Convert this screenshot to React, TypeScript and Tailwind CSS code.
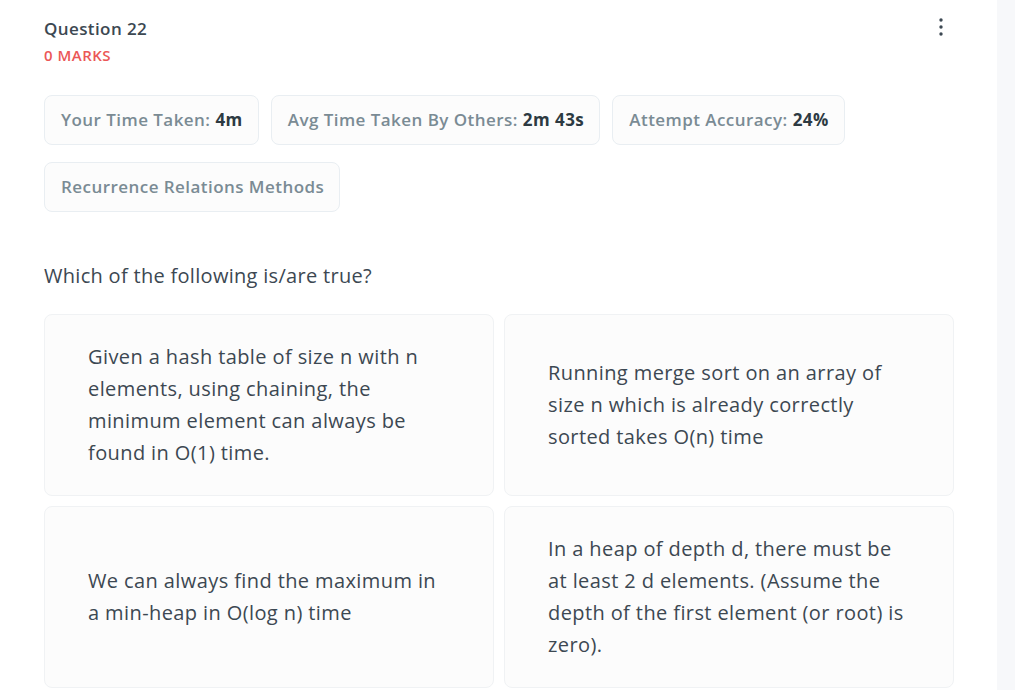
const stats = [
  { label: 'Your Time Taken:', value: '4m' },
  { label: 'Avg Time Taken By Others:', value: '2m 43s' },
  { label: 'Attempt Accuracy:', value: '24%' },
];

const options = [
  'Given a hash table of size n with n elements, using chaining, the minimum element can always be found in O(1) time.',
  'Running merge sort on an array of size n which is already correctly sorted takes O(n) time',
  'We can always find the maximum in a min-heap in O(log n) time',
  'In a heap of depth d, there must be at least 2 d elements. (Assume the depth of the first element (or root) is zero).',
];

function MoreIcon() {
  return (
    <svg width="8" height="22" viewBox="0 0 8 22" className="text-[#3c4852]">
      <circle cx="4" cy="4" r="1.7" fill="currentColor" />
      <circle cx="4" cy="11" r="1.7" fill="currentColor" />
      <circle cx="4" cy="18" r="1.7" fill="currentColor" />
    </svg>
  );
}

export default function App() {
  return (
    <div className="flex h-[690px] w-[1015px] overflow-hidden bg-white font-['Open_Sans',sans-serif] text-[#3c4852]">
      <main className="w-[997px] pl-[44px] pr-[43px] pt-[18px]">
        <div className="flex items-start justify-between">
          <div>
            <h2 className="text-[17px] font-semibold leading-[22px] tracking-[0.4px]">Question 22</h2>
            <p className="mt-[6px] text-[15px] font-semibold leading-[18px] tracking-[0.5px] text-[#eb5757]">0 MARKS</p>
          </div>
          <div className="mr-[9px] mt-[-2px]">
            <MoreIcon />
          </div>
        </div>

        <div className="mt-[31px] flex flex-wrap gap-x-[12px] gap-y-[17px]">
          {stats.map(({ label, value }) => (
            <div
              key={label}
              className="flex h-[50px] items-center rounded-lg border border-[#e9eef2] bg-[#fcfcfc] pl-[16px] pr-[15px] text-[17px] font-semibold tracking-[0.45px]"
            >
              <span className="text-[#7a8b94]">{label}</span>
              <span className="ml-[5px] font-bold text-[#2d3a42]">{value}</span>
            </div>
          ))}
          <div className="flex h-[50px] items-center rounded-lg border border-[#e9eef2] bg-[#fcfcfc] pl-[16px] pr-[15px] text-[17px] font-semibold tracking-[0.45px] text-[#7a8b94]">
            Recurrence Relations Methods
          </div>
        </div>

        <p className="mt-[50px] text-[20px] leading-[28px] tracking-[0.3px]">Which of the following is/are true?</p>

        <div className="mt-[24px] grid grid-cols-2 gap-[10px]">
          {options.map((text) => (
            <div
              key={text}
              className="flex h-[182px] items-center rounded-lg border border-[#f0f2f4] bg-[#fcfcfc] px-[43px]"
            >
              <p className="text-[20px] leading-[32px] tracking-[0.4px] text-[#3c4852]">{text}</p>
            </div>
          ))}
        </div>
      </main>
      <aside className="flex-1 bg-[#f7f8fa]" />
    </div>
  );
}
